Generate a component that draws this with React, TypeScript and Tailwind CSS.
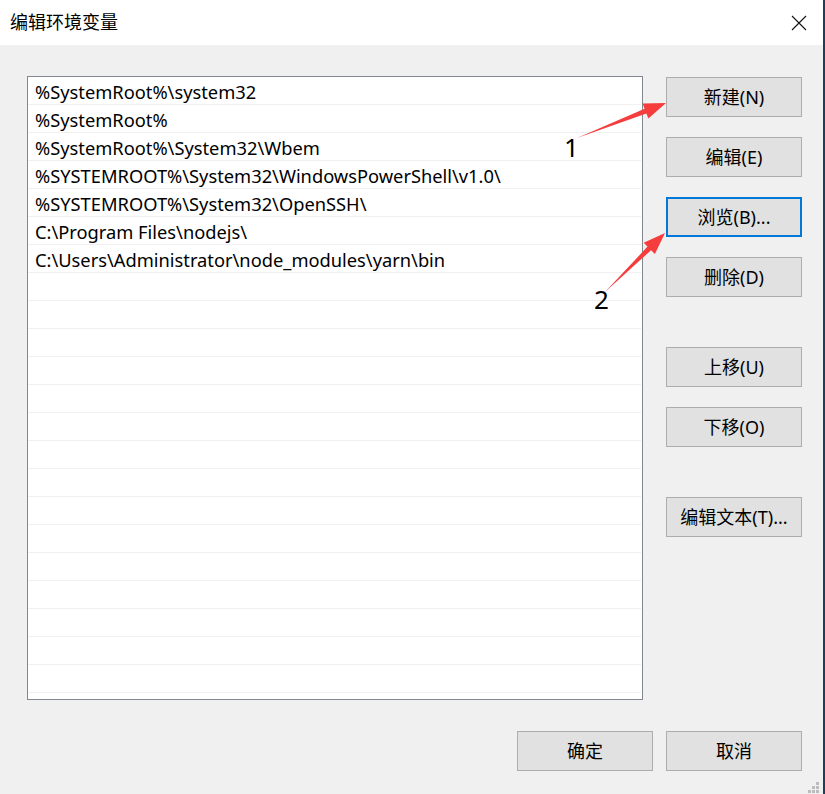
import React from 'react';

const paths = [
  '%SystemRoot%\\system32',
  '%SystemRoot%',
  '%SystemRoot%\\System32\\Wbem',
  '%SYSTEMROOT%\\System32\\WindowsPowerShell\\v1.0\\',
  '%SYSTEMROOT%\\System32\\OpenSSH\\',
  'C:\\Program Files\\nodejs\\',
  'C:\\Users\\Administrator\\node_modules\\yarn\\bin',
];

const TOTAL_ROWS = 23;

const font = { fontFamily: '"Noto Sans", "Noto Sans CJK SC", sans-serif' };

function Btn({ label, focused }: { label: string; focused?: boolean }) {
  return (
    <button
      className={`w-[136px] h-[40px] bg-[#e1e1e1] text-[18px] text-black flex items-center justify-center ${
        focused ? 'border-2 border-[#0078d7]' : 'border border-[#adadad]'
      }`}
    >
      {label}
    </button>
  );
}

function Grip() {
  // size grip dots in the bottom-right corner
  const dots = [
    [8, 0],
    [4, 4],
    [8, 4],
    [0, 8],
    [4, 8],
    [8, 8],
  ];
  return (
    <svg width="12" height="12" className="absolute right-[3px] bottom-0">
      {dots.map(([x, y], i) => (
        <rect key={i} x={x} y={y} width="3" height="3" fill="#bcbcbc" />
      ))}
    </svg>
  );
}

function Annotations() {
  return (
    <>
      <svg className="absolute inset-0 pointer-events-none" width="825" height="794">
        <polygon
          points="577,138 644.6,108.7 642.6,103.6 666,103 648.4,118.5 646.4,113.4"
          fill="#f53d3d"
        />
        <polygon
          points="605,292 647.5,246.6 643.7,242.7 665,233 654.9,254.1 651.1,250.2"
          fill="#f53d3d"
        />
      </svg>
      <div className="absolute left-[564px] top-[134px] text-[26px] leading-none text-black">1</div>
      <div className="absolute left-[594px] top-[286px] text-[26px] leading-none text-black">2</div>
    </>
  );
}

export default function App() {
  return (
    <div
      className="relative w-[825px] h-[794px] bg-[#f0f0f0] border-r-2 border-[#1b3d5e] overflow-hidden"
      style={font}
    >
      {/* title bar */}
      <div className="h-[45px] bg-white flex items-center justify-between pl-[10px] pr-[16px]">
        <span className="text-[18px] text-black">编辑环境变量</span>
        <svg width="16" height="16" viewBox="0 0 16 16">
          <path d="M1 1 L15 15 M15 1 L1 15" stroke="#111" strokeWidth="1.1" />
        </svg>
      </div>

      <div className="flex pt-[31px] pl-[27px]">
        {/* path list */}
        <div className="w-[616px] h-[624px] bg-white border border-[#828790] overflow-hidden">
          {Array.from({ length: TOTAL_ROWS }).map((_, i) => (
            <div
              key={i}
              className="h-[28px] border-b border-[#f0f0f0] mr-[1px] flex items-center pl-[7px] pt-[3px] text-[18.3px] text-black whitespace-nowrap"
            >
              {paths[i] ?? ''}
            </div>
          ))}
        </div>

        {/* side buttons */}
        <div className="ml-[23px] pt-[1px] flex flex-col">
          <div className="flex flex-col gap-[20px]">
            <Btn label="新建(N)" />
            <Btn label="编辑(E)" />
            <Btn label="浏览(B)..." focused />
            <Btn label="删除(D)" />
          </div>
          <div className="flex flex-col gap-[20px] mt-[50px]">
            <Btn label="上移(U)" />
            <Btn label="下移(O)" />
          </div>
          <div className="mt-[50px]">
            <Btn label="编辑文本(T)..." />
          </div>
        </div>
      </div>

      {/* dialog buttons */}
      <div className="flex justify-end gap-[13px] pr-[21px] mt-[31px]">
        <Btn label="确定" />
        <Btn label="取消" />
      </div>

      <Grip />
      <Annotations />
    </div>
  );
}
